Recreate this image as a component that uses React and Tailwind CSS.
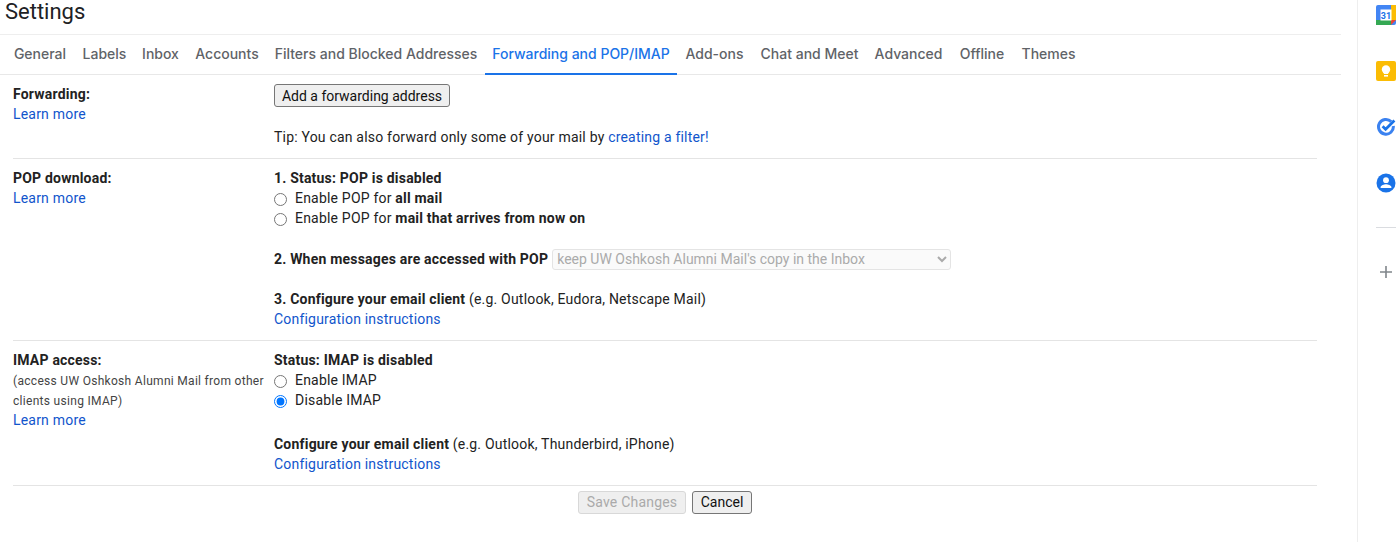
const linkCls = "text-[#1155cc] block w-fit";

function Learn() {
  return <a className={linkCls}>Learn more</a>;
}

function Radio({ checked, disabled, children }) {
  return (
    <label className="flex items-center h-5">
      <input type="radio" defaultChecked={checked} name={disabled} className="w-[13px] h-[13px] m-0 mr-2 mt-[3px] shrink-0" />
      <span>{children}</span>
    </label>
  );
}

function Row({ left, children }) {
  return (
    <div className="flex border-b border-[#e4e4e4] pt-[9px] pb-[11px] text-[14px] leading-5 tracking-[0.2px] text-[#222]">
      <div className="w-[261px] shrink-0">{left}</div>
      <div className="flex-1">{children}</div>
    </div>
  );
}

const tabs = [
  ["General", "w-[70px]"],
  ["Labels", "w-[59px]"],
  ["Inbox", "w-[53px]"],
  ["Accounts", "w-[80px]"],
  ["Filters and Blocked Addresses", "w-[218px]"],
  ["Forwarding and POP/IMAP", "w-[192px]"],
  ["Add-ons", "w-[75px]"],
  ["Chat and Meet", "w-[115px]"],
  ["Advanced", "w-[83px]"],
  ["Offline", "w-[64px]"],
  ["Themes", "w-[69px]"],
];

function CalendarIcon() {
  return (
    <svg width="20" height="20" viewBox="0 0 20 20">
      <rect x="0" y="0" width="20" height="20" rx="2" fill="#4285f4" />
      <rect x="0" y="15" width="15" height="5" fill="#34a853" />
      <rect x="15" y="0" width="5" height="15" fill="#fbbc04" />
      <path d="M15 15h5l-5 5z" fill="#ea4335" />
      <rect x="4.5" y="4.5" width="11" height="11" fill="#fff" />
      <text x="10" y="13.5" textAnchor="middle" fontSize="9" fontWeight="700" fontFamily="Roboto, sans-serif" fill="#1a73e8">31</text>
    </svg>
  );
}

function KeepIcon() {
  return (
    <svg width="20" height="20" viewBox="0 0 20 20">
      <rect width="20" height="20" rx="2" fill="#fbbc04" />
      <circle cx="10" cy="8.5" r="4.2" fill="#fff" />
      <rect x="7.8" y="11" width="4.4" height="2" fill="#fff" />
      <rect x="8" y="14" width="4" height="1.6" fill="#fff" />
    </svg>
  );
}

function TasksIcon() {
  return (
    <svg width="20" height="20" viewBox="0 0 20 20" fill="none">
      <path d="M15.2 4.6A7.4 7.4 0 1 0 17.3 9" stroke="#3b82f0" strokeWidth="3" />
      <path d="M6.6 9.2l3 3L18.4 3.6" stroke="#1a73e8" strokeWidth="2.8" />
    </svg>
  );
}

function ContactsIcon() {
  return (
    <svg width="20" height="20" viewBox="0 0 20 20">
      <circle cx="10" cy="10" r="9.5" fill="#1a73e8" />
      <circle cx="10" cy="7.2" r="2.9" fill="#fff" />
      <path d="M4.6 14.2c0-2 3.6-3 5.4-3s5.4 1 5.4 3v.9H4.6z" fill="#fff" />
    </svg>
  );
}

export default function App() {
  return (
    <div className="flex h-[542px] w-[1400px] overflow-hidden bg-white text-[14px] font-['Roboto',sans-serif]">
      <main className="w-[1357px] shrink-0">
        <div className="h-[35px] w-[1341px] border-b border-[#eeeeee] pl-[5px] text-[22px] leading-6 text-[#202124]">Settings</div>
        <nav className="flex h-10 w-[1341px] border-b border-[#e8e8e8] pl-[5px] font-['Inter',sans-serif] text-[14px] font-medium text-[#5f6368]">
          {tabs.map(([t, w], i) => (
            <div key={t} className={i === 5 ? `h-10 ${w} text-center whitespace-nowrap leading-[37px] border-b-2 border-[#1a73e8] text-[#1a73e8]` : `h-[39px] ${w} text-center whitespace-nowrap leading-[37px]`}>{t}</div>
          ))}
        </nav>
        <div className="ml-[13px] w-[1304px]">
          <Row left={<><div className="font-bold">Forwarding:</div><Learn /></>}>
            <button className="block h-[23px] w-[176px] rounded-[3px] border border-[#767676] bg-[#efefef] leading-5 tracking-normal text-[#111]">Add a forwarding address</button>
            <div className="mt-5">Tip: You can also forward only some of your mail by <a className="text-[#1155cc]">creating a filter!</a></div>
          </Row>
          <Row left={<><div className="font-bold">POP download:</div><Learn /></>}>
            <div className="font-bold">1. Status: POP is disabled</div>
            <Radio disabled="pop">Enable POP for <b>all mail</b></Radio>
            <Radio disabled="pop">Enable POP for <b>mail that arrives from now on</b></Radio>
            <div className="mt-[21px] flex h-5 items-start">
              <b>2. When messages are accessed with POP</b>
              <select disabled className="ml-1 h-[21px] w-[399px] rounded-[3px] border border-[#e4e4e4] bg-[#fafafa] pb-[2px] text-[14px] tracking-normal text-[#aaa] opacity-100">
                <option>keep UW Oshkosh Alumni Mail's copy in the Inbox</option>
              </select>
            </div>
            <div className="mt-5"><b>3. Configure your email client</b> (e.g. Outlook, Eudora, Netscape Mail)</div>
            <a className={linkCls}>Configuration instructions</a>
          </Row>
          <Row left={
            <>
              <div className="font-bold">IMAP access:</div>
              <div className="pt-px -mb-px text-[12px] tracking-[0.3px] text-[#444]">(access UW Oshkosh Alumni Mail from other clients using IMAP)</div>
              <Learn />
            </>
          }>
            <div className="font-bold">Status: IMAP is disabled</div>
            <Radio disabled="imap">Enable IMAP</Radio>
            <Radio disabled="imap" checked>Disable IMAP</Radio>
            <div className="mt-6"><b>Configure your email client</b> (e.g. Outlook, Thunderbird, iPhone)</div>
            <a className={linkCls}>Configuration instructions</a>
          </Row>
          <div className="flex justify-center gap-[6px] pt-[5px]">
            <button disabled className="h-[23px] w-[108px] rounded-[3px] border border-[#d8d8d8] bg-[#efefef] pb-[2px] leading-5 tracking-[0.2px] text-[#aaa]">Save Changes</button>
            <button className="h-[23px] w-[60px] rounded-[3px] border border-[#767676] bg-[#efefef] pb-[2px] leading-5 tracking-normal text-[#111]">Cancel</button>
          </div>
        </div>
      </main>
      <aside className="flex-1 border-l border-[#eeeeee] pt-[5px] pl-[18px]">
        <div className="flex flex-col gap-9">
          <CalendarIcon />
          <KeepIcon />
          <TasksIcon />
          <ContactsIcon />
        </div>
        <div className="mt-[34px] h-px w-5 bg-[#dadce0]" />
        <svg className="mt-[37px] ml-[3px]" width="14" height="14" viewBox="0 0 14 14"><path d="M7 1v12M1 7h12" stroke="#80868b" strokeWidth="1.6" /></svg>
      </aside>
    </div>
  );
}
